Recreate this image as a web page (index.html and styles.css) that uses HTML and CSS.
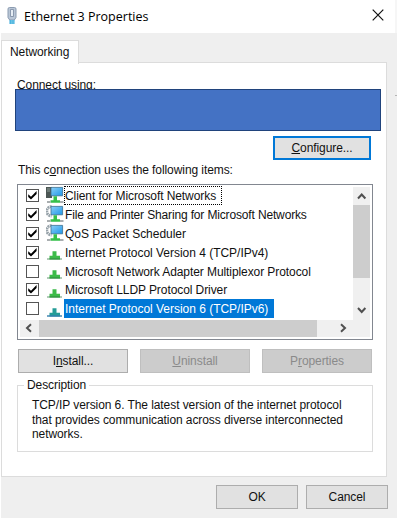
FILE: index.html
```html
<!DOCTYPE html>
<html lang="en">
<head>
    <meta charset="UTF-8">
    <meta name="viewport" content="width=device-width, initial-scale=1.0">
    <title>Ethernet 3 Properties</title>
    <link rel="stylesheet" href="styles.css">
</head>
<body>

    <!-- shared icons -->
    <svg class="defs" width="0" height="0">
        <defs>
            <linearGradient id="screen" x1="0" y1="0" x2="1" y2="1">
                <stop offset="0" stop-color="#8bd0f8"/>
                <stop offset="1" stop-color="#1f97e8"/>
            </linearGradient>
            <symbol id="check" viewBox="0 0 11 11">
                <path d="M1.200 4.200v2.800l2.800 2.600 5.600-5.600v-2.900L4 6.700z" fill="#000"/>
            </symbol>
            <symbol id="client" viewBox="0 0 18 18">
                <path d="M0 1h6v11H0z" fill="#4c5654"/>
                <path d="M1 3h3M1 5h3" stroke="#8fa09a"/>
                <path d="M5 1.400h11.600v8.400H5z" fill="url(#screen)" stroke="#3c7090" stroke-width=".8"/>
                <path d="M7.500 10.300h3.500v4h3v2.500H4.500v-2.500h3z" fill="#35c04a"/>
                <path d="M1 16h3.500M14 16h3.500" stroke="#a9aeb0" stroke-width="2"/>
            </symbol>
            <symbol id="service" viewBox="0 0 18 18">
                <path d="M5.500 1.500a4.500 4.500 0 0 0 0 9.500" fill="none" stroke="#98a3aa" stroke-width="3" stroke-dasharray="1.700 .6"/>
                <path d="M5 1.400h11.600v8.400H5z" fill="url(#screen)" stroke="#3c7090" stroke-width=".8"/>
                <path d="M7.500 10.300h3.500v4h3v2.500H4.500v-2.500h3z" fill="#35c04a"/>
                <path d="M1 16h3.500M14 16h3.500" stroke="#a9aeb0" stroke-width="2"/>
            </symbol>
            <symbol id="protocol" viewBox="0 0 18 18">
                <path d="M6.500 8.300h4v4.500h3.500v3.700H3.500v-3.700h3z" fill="#3cbb49"/>
                <path d="M1 16h15" stroke="#8fb398" stroke-width="1.400"/>
                <path d="M3.500 15.800h10.500" stroke="#259a35" stroke-width="1.200"/>
            </symbol>
            <symbol id="protocol-selected" viewBox="0 0 18 18">
                <path d="M6.500 8.300h4v4.500h3.500v3.700H3.500v-3.700h3z" fill="#249c97"/>
                <path d="M1 16h15" stroke="#347fae" stroke-width="1.400"/>
            </symbol>
        </defs>
    </svg>

    <div class="dialog">
        <div class="titlebar">
            <svg class="title-icon" width="10" height="19" viewBox="0 0 10 19">
                <path d="M1 2q0-1.500 1.500-1.500h5Q9 .5 9 2v8.500L7.300 13H2.700L1 10.500z" fill="#b9c6d6" stroke="#8b9bb0"/>
                <path d="M3.500 2.500h3v7h-3z" fill="#e6edf4" stroke="#7889a0" stroke-width=".8"/>
                <path d="M2.500 13h5v4h-5z" fill="#35a7d8"/>
                <path d="M4.200 13v4M6 13v4" stroke="#a4e2f5" stroke-width=".7"/>
            </svg>
            <span class="title">Ethernet 3 Properties</span>
            <svg class="close" width="12" height="12" viewBox="0 0 12 12">
                <path d="M.7.7l10.600 10.600M11.300.7L.7 11.300" stroke="#111" stroke-width="1.200"/>
            </svg>
        </div>

        <div class="tabs"><div class="tab">Networking</div></div>

        <div class="panel">
            <div class="label connect">Connect using:</div>
            <div class="adapter"></div>
            <div class="configure-row">
                <button class="btn default"><span><u>C</u>onfigure...</span></button>
            </div>
            <div class="label uses">This c<u>o</u>nnection uses the following items:</div>

            <div class="listbox">
                <div class="items">
                    <div class="item">
                        <span class="box"><svg><use href="#check"/></svg></span>
                        <svg class="icon"><use href="#client"/></svg>
                        <span class="name focused">Client for Microsoft Networks</span>
                    </div>
                    <div class="item">
                        <span class="box"><svg><use href="#check"/></svg></span>
                        <svg class="icon"><use href="#service"/></svg>
                        <span class="name tight">File and Printer Sharing for Microsoft Networks</span>
                    </div>
                    <div class="item">
                        <span class="box"><svg><use href="#check"/></svg></span>
                        <svg class="icon"><use href="#service"/></svg>
                        <span class="name loose">QoS Packet Scheduler</span>
                    </div>
                    <div class="item">
                        <span class="box"><svg><use href="#check"/></svg></span>
                        <svg class="icon"><use href="#protocol"/></svg>
                        <span class="name loose">Internet Protocol Version 4 (TCP/IPv4)</span>
                    </div>
                    <div class="item">
                        <span class="box"></span>
                        <svg class="icon"><use href="#protocol"/></svg>
                        <span class="name">Microsoft Network Adapter Multiplexor Protocol</span>
                    </div>
                    <div class="item">
                        <span class="box"><svg><use href="#check"/></svg></span>
                        <svg class="icon"><use href="#protocol"/></svg>
                        <span class="name">Microsoft LLDP Protocol Driver</span>
                    </div>
                    <div class="item">
                        <span class="box"></span>
                        <svg class="icon"><use href="#protocol-selected"/></svg>
                        <span class="name loose selected">Internet Protocol Version 6 (TCP/IPv6)</span>
                    </div>
                </div>
                <div class="vscroll">
                    <svg width="17" height="18" viewBox="0 0 17 18"><path d="M5 11.500l3.700-4 3.700 4"/></svg>
                    <div class="vthumb"></div>
                    <svg class="down" width="17" height="18" viewBox="0 0 17 18"><path d="M5 6l3.700 4L12.400 6"/></svg>
                </div>
                <div class="hscroll">
                    <svg width="19" height="17" viewBox="0 0 19 17"><path d="M11 4.300l-4 3.700 4 3.700"/></svg>
                    <div class="hthumb"></div>
                    <svg class="right" width="17" height="17" viewBox="0 0 17 17"><path d="M6 4.300l4 3.700-4 3.700"/></svg>
                </div>
            </div>

            <div class="actions">
                <button class="btn"><span>I<u>n</u>stall...</span></button>
                <button class="btn" disabled><span><u>U</u>ninstall</span></button>
                <button class="btn" disabled><span>P<u>r</u>operties</span></button>
            </div>

            <fieldset class="description">
                <legend>Description</legend>
                <p>TCP/IP version 6. The latest version of the internet protocol<br>that provides communication across diverse interconnected<br>networks.</p>
            </fieldset>
        </div>

        <div class="footer">
            <button class="btn">OK</button>
            <button class="btn">Cancel</button>
        </div>
        <span class="tick"></span>
    </div>

</body>
</html>
```
FILE: styles.css
```css
* {
    box-sizing: border-box;
}
body {
    margin: 0;
    width: 400px;
    height: 518px;
    overflow: hidden;
    background: #fff;
    font-family: "Liberation Sans", Arial, sans-serif;
    font-size: 12px;
    letter-spacing: -0.08px;
    color: #111;
}
.defs {
    display: block;
}
.dialog {
    position: relative;
    width: 397px;
    height: 518px;
    background: #efefef;
    border-left: 1px solid #fff;
}
.titlebar {
    display: flex;
    align-items: center;
    height: 33px;
    width: 396px;
    padding: 0 11px 0 6px;
    background: #fff;
    border-right: 2px solid #f6f6f6;
}
.title {
    margin-left: 7px;
    flex: 1;
    font-family: "Open Sans", sans-serif;
    font-size: 12.5px;
    letter-spacing: 0;
    color: #000;
}
.close {
    margin-bottom: 3px;
}
.tabs {
    display: flex;
    height: 29px;
    padding-top: 7px;
}
.tab {
    width: 78px;
    height: 24px;
    padding-left: 8px;
    line-height: 22px;
    background: #fff;
    border: 1px solid #dcdcdc;
    border-bottom: 0;
    position: relative;
    z-index: 1;
}
.panel {
    width: 386px;
    height: 415px;
    padding: 15px 12px 0 15px;
    background: #fff;
    border: 1px solid #dcdcdc;
}
.label {
    line-height: 14px;
    white-space: nowrap;
}
.connect {
    height: 11px;
}
.adapter {
    position: relative;
    width: 366px;
    height: 42px;
    margin-left: -2px;
    background: #4472c4;
    border: 1px solid #20437c;
}
.configure-row {
    display: flex;
    justify-content: flex-end;
    width: 354px;
    margin-top: 5px;
}
.uses {
    margin: 3px 0 0 1px;
}
.btn {
    width: 110px;
    height: 24px;
    padding: 0;
    font: inherit;
    letter-spacing: inherit;
    color: #111;
    background: #e1e1e1;
    border: 1px solid #adadad;
    border-radius: 0;
}
.btn:disabled {
    color: #8a8a8a;
    background: #ccc;
    border-color: #bfbfbf;
}
.default {
    width: 98px;
    border: 2px solid #0078d7;
}
.listbox {
    display: grid;
    grid-template-columns: 333px 17px;
    grid-template-rows: 133px 17px;
    width: 356px;
    height: 156px;
    margin-top: 7px;
    padding: 2px;
    border: 1px solid #828790;
}
.items {
    margin-top: -1px;
}
.item {
    display: flex;
    align-items: center;
    height: 18.9px;
}
.box {
    width: 13px;
    height: 13px;
    margin-left: 6px;
    border: 1px solid #555;
}
.box svg {
    display: block;
    width: 11px;
    height: 11px;
}
.icon {
    width: 18px;
    height: 18px;
    margin-left: 7px;
}
.name {
    height: 19px;
    padding: 0 5px 0 0;
    border: 1px solid transparent;
    line-height: 18px;
    white-space: nowrap;
}
.tight {
    letter-spacing: -0.15px;
}
.loose {
    letter-spacing: -0.02px;
}
.focused {
    border: 1px dotted #000;
}
.selected {
    color: #fff;
    background: #0078d7;
    background-clip: border-box;
}
.vscroll, .hscroll {
    display: flex;
    background: #f0f0f0;
}
.vscroll {
    flex-direction: column;
}
.hscroll {
    grid-column: 1 / 3;
}
.vscroll path, .hscroll path {
    fill: none;
    stroke: #505050;
    stroke-width: 2;
}
.vthumb {
    height: 73px;
    background: #cdcdcd;
}
.down {
    margin-top: auto;
}
.hthumb {
    width: 278px;
    background: #cdcdcd;
}
.right {
    margin-left: auto;
    margin-right: 18px;
}
.actions {
    display: flex;
    justify-content: space-between;
    width: 354px;
    margin: 9px 0 0 1px;
}
.description {
    width: 356px;
    height: 74px;
    margin: 5px 0 0;
    padding: 6px 0 0 14px;
    border: 1px solid #dcdcdc;
}
.description legend {
    margin-left: -8px;
    padding: 0 3px;
    line-height: 14px;
}
.description p {
    margin: 0;
    line-height: 14.5px;
    white-space: nowrap;
}
.footer {
    display: flex;
    justify-content: flex-end;
    gap: 8px;
    width: 387px;
    margin-top: 8px;
}
.footer .btn {
    width: 82px;
}
/* faint mark on the right window edge */
.tick {
    position: absolute;
    top: 95px;
    right: 0;
    width: 2px;
    height: 1px;
    background: #b5b5b5;
}
```
